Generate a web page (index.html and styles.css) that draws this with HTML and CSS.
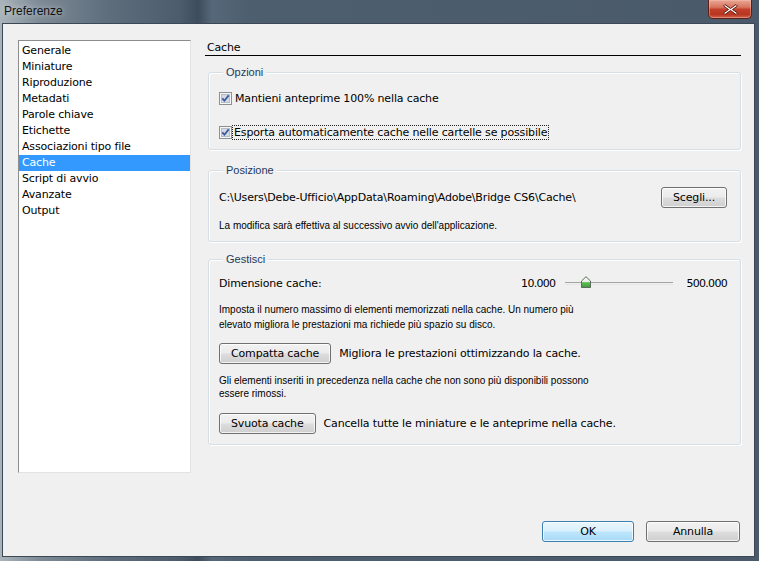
FILE: index.html
```html
<!DOCTYPE html>
<html lang="it">
<head>
  <meta charset="UTF-8" />
  <title>Preferenze</title>
  <link rel="stylesheet" href="styles.css">
</head>
<body>
  <div class="window">
    <div class="titlebar">
      <span class="title">Preferenze</span>
      <span class="close">
        <svg width="17" height="13" viewBox="0 0 17 13">
          <path d="M3 1.5 L8.5 5.5 L14 1.5 L15.5 3 L10.5 6.5 L15.5 10 L14 11.5 L8.5 7.5 L3 11.5 L1.5 10 L6.5 6.5 L1.5 3 Z" fill="#fff" stroke="#5a1a10" stroke-width="1"/>
        </svg>
      </span>
    </div>

    <div class="client">
      <div class="main">
        <ul class="nav">
          <li>Generale</li>
          <li>Miniature</li>
          <li>Riproduzione</li>
          <li>Metadati</li>
          <li>Parole chiave</li>
          <li>Etichette</li>
          <li>Associazioni tipo file</li>
          <li class="selected">Cache</li>
          <li>Script di avvio</li>
          <li>Avanzate</li>
          <li>Output</li>
        </ul>

        <div class="panel">
          <div class="panel-title">Cache</div>

          <div class="group opzioni">
            <span class="legend">Opzioni</span>
            <label class="check">
              <svg class="box" width="13" height="13" viewBox="0 0 13 13">
                <rect x="0.5" y="0.5" width="12" height="12" fill="#f4f6f8" stroke="#8e8f8f"/>
                <rect x="2.5" y="2.5" width="8" height="8" fill="#d3dae3" stroke="#b4bcc6"/>
                <path d="M3.3 6.4 L5.4 8.7 L9.7 3.4" fill="none" stroke="#3b5a9c" stroke-width="1.8"/>
              </svg>
              <span>Mantieni anteprime 100% nella cache</span>
            </label>
            <label class="check">
              <svg class="box" width="13" height="13" viewBox="0 0 13 13">
                <rect x="0.5" y="0.5" width="12" height="12" fill="#f4f6f8" stroke="#8e8f8f"/>
                <rect x="2.5" y="2.5" width="8" height="8" fill="#d3dae3" stroke="#b4bcc6"/>
                <path d="M3.3 6.4 L5.4 8.7 L9.7 3.4" fill="none" stroke="#3b5a9c" stroke-width="1.8"/>
              </svg>
              <span class="focus">Esporta automaticamente cache nelle cartelle se possibile</span>
            </label>
          </div>

          <div class="group posizione">
            <span class="legend">Posizione</span>
            <div class="row">
              <span class="path">C:\Users\Debe-Ufficio\AppData\Roaming\Adobe\Bridge CS6\Cache\</span>
              <button class="btn">Scegli...</button>
            </div>
            <p class="note note-pos">La modifica sarà effettiva al successivo avvio dell'applicazione.</p>
          </div>

          <div class="group gestisci">
            <span class="legend">Gestisci</span>
            <div class="row size-row">
              <span>Dimensione cache:</span>
              <div class="slider">
                <span class="num">10.000</span>
                <span class="track">
                  <svg class="thumb" width="10" height="12" viewBox="0 0 10 12">
                    <defs>
                      <linearGradient id="tg" x1="0" y1="0" x2="0" y2="1">
                        <stop offset="0" stop-color="#ffffff"/>
                        <stop offset="0.45" stop-color="#e4efe4"/>
                        <stop offset="0.55" stop-color="#5fbf5a"/>
                        <stop offset="1" stop-color="#3f9a3a"/>
                      </linearGradient>
                    </defs>
                    <path d="M0.5 5 L5 0.7 L9.5 5 V11.5 H0.5 Z" fill="url(#tg)" stroke="#5b6b5b"/>
                  </svg>
                </span>
                <span class="num">500.000</span>
              </div>
            </div>
            <p class="note note-size">Imposta il numero massimo di elementi memorizzati nella cache. Un numero più<br>elevato migliora le prestazioni ma richiede più spazio su disco.</p>
            <div class="row action compatta">
              <button class="btn">Compatta cache</button>
              <span>Migliora le prestazioni ottimizzando la cache.</span>
            </div>
            <p class="note note-old">Gli elementi inseriti in precedenza nella cache che non sono più disponibili possono<br>essere rimossi.</p>
            <div class="row action svuota">
              <button class="btn">Svuota cache</button>
              <span>Cancella tutte le miniature e le anteprime nella cache.</span>
            </div>
          </div>
        </div>
      </div>

      <div class="footer">
        <button class="btn btn-ok">OK</button>
        <button class="btn btn-cancel">Annulla</button>
      </div>
    </div>
  </div>
</body>
</html>
```

FILE: styles.css
```css
html, body {
  margin: 0;
  padding: 0;
  width: 759px;
  height: 561px;
  overflow: hidden;
}
body {
  font-family: 'DejaVu Sans', Verdana, sans-serif;
  font-size: 11px;
  letter-spacing: -0.15px;
  color: #000;
}
.window {
  height: 561px;
  display: flex;
  flex-direction: column;
  background: linear-gradient(to right, #a9b3ba 0, #7d8a95 40px, #5d6d7c 110px, #4c5c6c 180px, #3e4d5c 198px, #566779 212px, #4d5e6f 250px, #4a5a6a 100%);
}
.titlebar {
  height: 23px;
  display: flex;
  align-items: flex-start;
  flex-shrink: 0;
}
.title {
  font-family: 'Liberation Sans', Arial, sans-serif;
  font-size: 12px;
  letter-spacing: 0;
  padding: 4px 0 0 4px;
  color: #111;
  text-shadow: 0 0 6px rgba(255,255,255,0.7);
}
.close {
  margin-left: auto;
  margin-right: 7px;
  width: 42px;
  height: 18px;
  border: 1px solid #5c2016;
  border-top: none;
  border-radius: 0 0 5px 5px;
  background: linear-gradient(#e9a796 0, #d9745e 40%, #c2402a 52%, #b9351f 80%, #d0644c 100%);
  display: flex;
  align-items: center;
  justify-content: center;
  box-shadow: inset 0 0 0 1px rgba(255,200,190,0.4);
}
.client {
  flex: 1;
  margin: 0 4px 4px 2px;
  border: 1px solid #3c4855;
  background: #f0f0f0;
  display: flex;
  flex-direction: column;
}
.main {
  display: flex;
  padding: 16px 13px 0 15px;
}
.nav {
  list-style: none;
  margin: 0;
  padding: 2px 0 0 0;
  width: 171px;
  height: 429px;
  background: #fff;
  border: 1px solid;
  border-color: #8d8d8d #e3e3e3 #e3e3e3 #8d8d8d;
  box-shadow: inset 1px 1px 0 #fff;
}
.nav li {
  height: 16px;
  line-height: 16px;
  padding-left: 3px;
}
.nav li.selected {
  background: #3399ff;
  color: #fff;
}
.panel {
  flex: 1;
  margin-left: 14px;
  margin-top: 1px;
}
.panel-title {
  height: 14px;
  line-height: 14px;
  padding-left: 2px;
  border-bottom: 1px solid #000;
}
.group {
  position: relative;
  margin-left: 3px;
  border: 1px solid #d5dfe5;
  border-radius: 3px;
  box-shadow: inset 1px 1px 0 #fff, 1px 1px 0 #fff;
  padding: 0 13px 0 10px;
}
.legend {
  position: absolute;
  top: -8px;
  left: 14px;
  padding: 0 3px;
  background: #f0f0f0;
  font-family: 'Liberation Sans', Arial, sans-serif;
  font-size: 11px;
  letter-spacing: 0;
  line-height: 14px;
  color: #1e395b;
}
.opzioni {
  margin-top: 16px;
  padding-top: 17px;
  padding-bottom: 9px;
}
.check {
  display: flex;
  align-items: center;
  height: 16px;
}
.check + .check {
  margin-top: 18px;
}
.check .box {
  margin-right: 3px;
  flex-shrink: 0;
}
.focus {
  outline: 1px dotted #222;
  outline-offset: 0;
  padding: 0 1px;
  margin-left: -2px;
}
.posizione {
  margin-top: 20px;
  padding-top: 16px;
  padding-bottom: 8px;
}
.row {
  display: flex;
  align-items: center;
}
.posizione .row {
  justify-content: space-between;
  height: 21px;
}
.note {
  margin: 0;
  font-family: 'Liberation Sans', Arial, sans-serif;
  font-size: 10px;
  letter-spacing: 0;
}
.note-pos {
  margin-top: 11px;
  line-height: 14px;
}
.gestisci {
  margin-top: 17px;
  padding-top: 15px;
  padding-bottom: 10px;
}
.size-row {
  height: 16px;
  justify-content: space-between;
}
.slider {
  display: flex;
  align-items: center;
}
.num {
  letter-spacing: -0.7px;
}
.track {
  position: relative;
  width: 108px;
  height: 1px;
  margin: 1px 13px 0 10px;
  border-top: 1px solid #a3a3a3;
  border-bottom: 1px solid #e6e6e6;
}
.thumb {
  position: absolute;
  left: 16px;
  top: -7px;
}
.note-size {
  margin-top: 11px;
  line-height: 15px;
}
.action {
  gap: 8px;
}
.compatta {
  margin-top: 11px;
}
.note-old {
  margin-top: 10px;
  line-height: 13px;
}
.svuota {
  margin-top: 13px;
}
.btn {
  font-family: 'DejaVu Sans', Verdana, sans-serif;
  font-size: 11px;
  letter-spacing: -0.15px;
  color: #000;
  height: 21px;
  padding: 0 11px;
  border: 1px solid #707070;
  border-radius: 3px;
  background: linear-gradient(#f2f2f2 0, #ebebeb 48%, #dddddd 52%, #cfcfcf 100%);
  box-shadow: inset 0 0 0 1px rgba(255,255,255,0.75);
  cursor: pointer;
}
.footer {
  margin-top: auto;
  display: flex;
  justify-content: flex-end;
  gap: 12px;
  padding: 0 14px 14px 0;
}
.btn-ok {
  width: 92px;
  border-color: #3c7fb1;
  background: linear-gradient(#eaf6fd 0, #d9f0fc 48%, #bee6fd 52%, #a7d9f5 100%);
}
.btn-cancel {
  width: 94px;
}
```
